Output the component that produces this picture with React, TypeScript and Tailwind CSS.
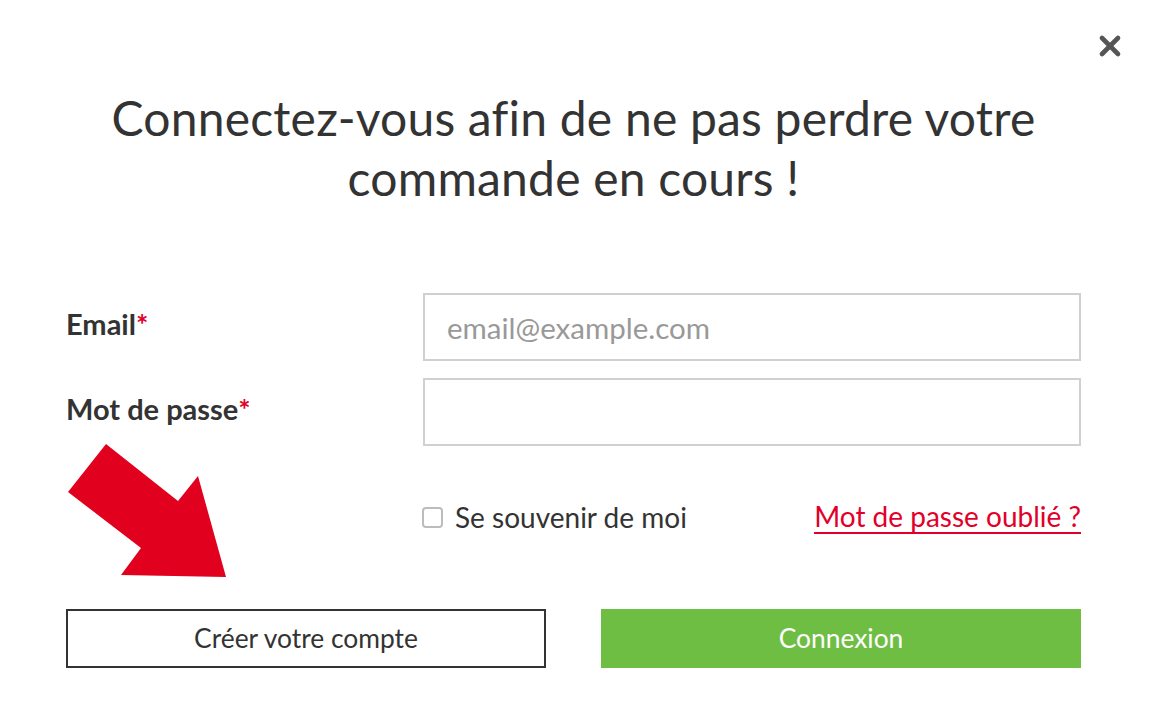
import { X } from "lucide-react";

export default function App() {
  return (
    <div
      className="relative w-[1160px] h-[709px] bg-white text-[#333333] overflow-hidden"
      style={{ fontFamily: "Lato, 'Noto Sans', sans-serif" }}
    >
      {/* close */}
      <button
        type="button"
        aria-label="fermer"
        className="absolute top-[30px] right-[34px] w-[32px] h-[32px] flex items-center justify-center text-[#555555]"
      >
        <X className="w-[36px] h-[36px]" strokeWidth={3.5} />
      </button>

      <div className="flex flex-col pt-[88px] pl-[66px] pr-[79px]">
        <h1 className="text-center text-[48px] leading-[60px] font-normal tracking-[0.2px]">
          Connectez-vous afin de ne pas perdre votre
          <br />
          commande en cours !
        </h1>

        <div className="mt-[85px] grid grid-cols-[357px_1fr] gap-y-[17px]">
          <label className="flex items-center pb-[6px] text-[29px] font-bold">
            Email<span className="text-[#e2002a]">*</span>
          </label>
          <input
            type="email"
            placeholder="email@example.com"
            className="h-[68px] w-full border-2 border-[#d0d0d0] px-[22px] text-[29.5px] outline-none placeholder:text-[#999999]"
          />
          <label className="flex items-center pb-[6px] text-[29px] font-bold">
            Mot de passe<span className="text-[#e2002a]">*</span>
          </label>
          <input
            type="password"
            className="h-[68px] w-full border-2 border-[#d0d0d0] px-[22px] text-[29.5px] outline-none"
          />
        </div>

        <div className="mt-[51px] ml-[356px] flex items-center justify-between h-[40px]">
          <label className="flex items-center gap-[12px] text-[28px]">
            <span className="w-[21px] h-[21px] rounded-[4px] border-2 border-[#bcbcbc] bg-white" />
            Se souvenir de moi
          </label>
          <a href="#" className="text-[28px] text-[#e2002a] border-b-2 border-[#e2002a] leading-[32px]">
            Mot de passe oublié ?
          </a>
        </div>

        <div className="mt-[72px] flex gap-[55px]">
          <button
            type="button"
            className="w-[480px] h-[59px] border-2 border-[#333333] text-[26.4px]"
          >
            Créer votre compte
          </button>
          <button
            type="button"
            className="w-[480px] h-[59px] bg-[#6fbe44] text-white text-[26.4px]"
          >
            Connexion
          </button>
        </div>
      </div>

      {/* annotation arrow */}
      <svg
        className="absolute left-0 top-0 pointer-events-none"
        width="1160"
        height="709"
        viewBox="0 0 1160 709"
      >
        <polygon
          points="106,444 68,492 141,548 121,575 226,577 198,476 178,501"
          fill="#e2001f"
        />
      </svg>
    </div>
  );
}
